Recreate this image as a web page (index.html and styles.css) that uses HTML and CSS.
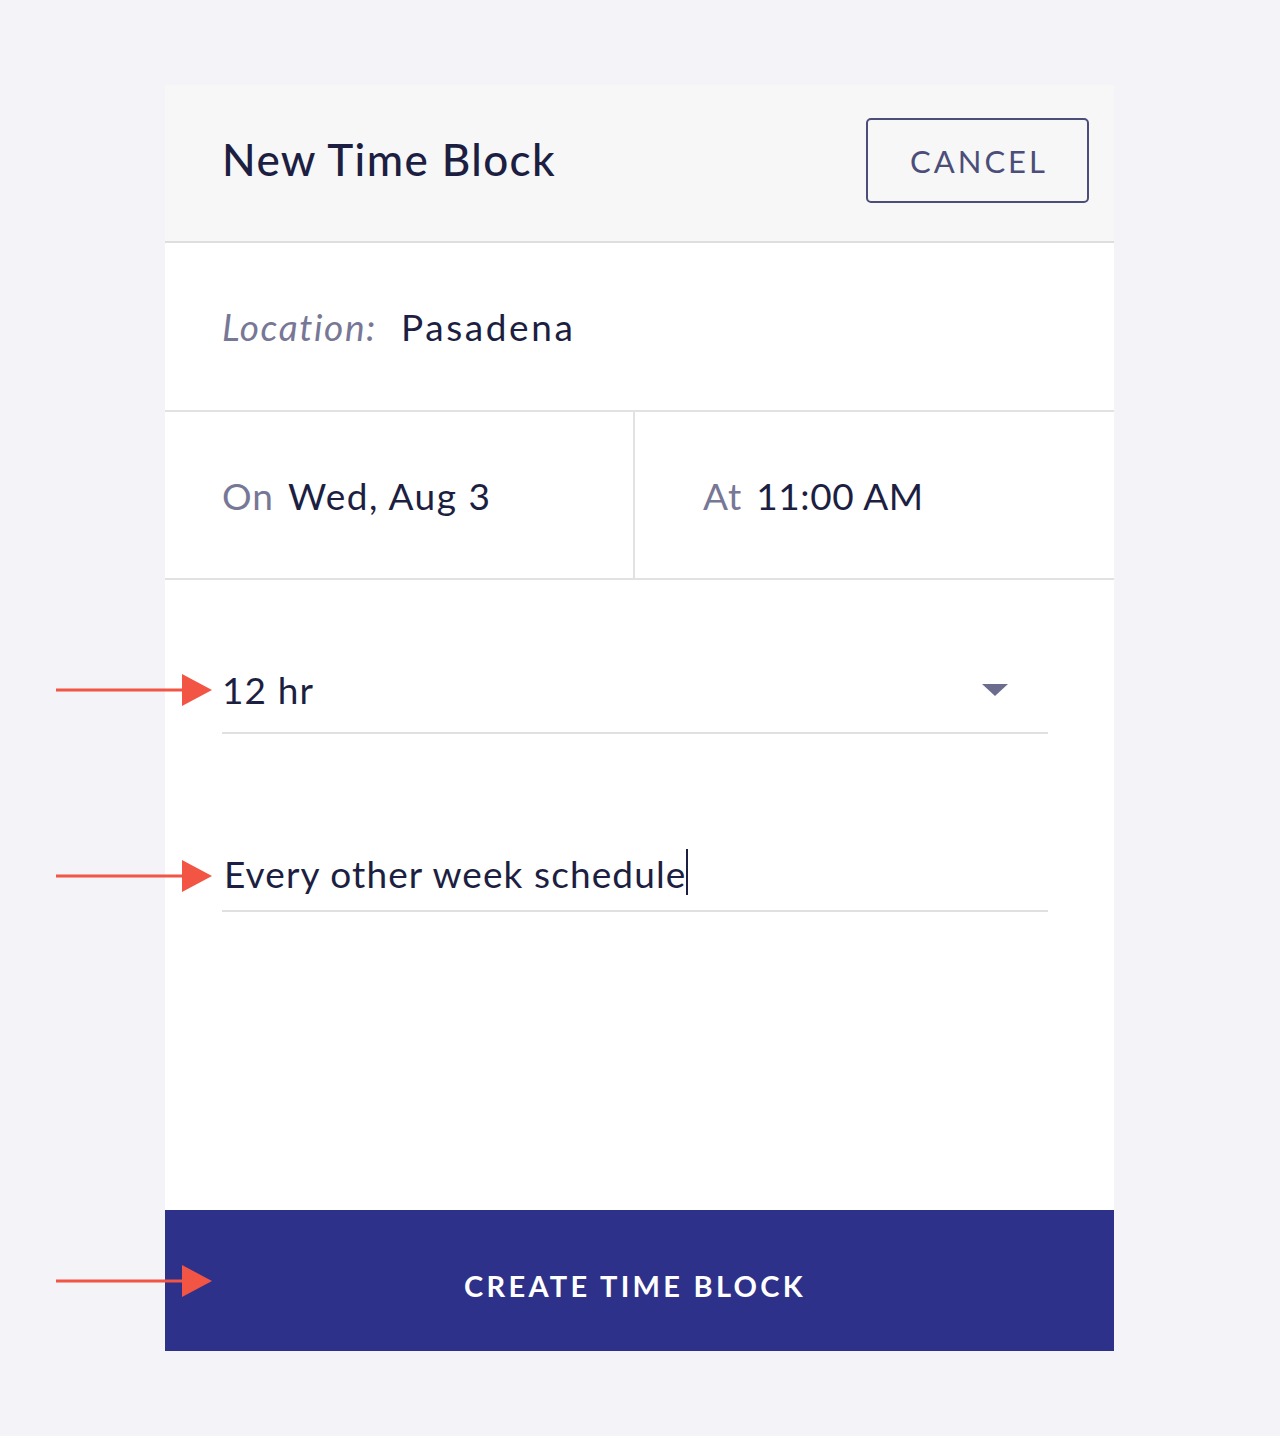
FILE: index.html
```html
<!DOCTYPE html>
<html lang="en">
<head>
<meta charset="utf-8">
<title>New Time Block</title>
<link rel="stylesheet" href="styles.css">
</head>
<body>
<div class="page">
  <div class="card">
    <header class="card-header">
      <h1 class="title">New Time Block</h1>
      <button class="cancel-btn" type="button">CANCEL</button>
    </header>
    <div class="row location-row">
      <span class="label label-italic">Location:</span>
      <span class="value value-wide">Pasadena</span>
    </div>
    <div class="row split-row">
      <div class="cell cell-left">
        <span class="label">On</span>
        <span class="value">Wed, Aug 3</span>
      </div>
      <div class="cell cell-right">
        <span class="label">At</span>
        <span class="value value-tight">11:00 AM</span>
      </div>
    </div>
    <div class="form-body">
      <div class="field field-select">
        <span class="field-text">12 hr</span>
        <svg class="caret" width="26" height="12" viewBox="0 0 26 12"><polygon points="0,0 26,0 13,12" fill="#6c6c8f"/></svg>
      </div>
      <div class="field field-input">
        <span class="field-text">Every other week schedule</span><span class="cursor"></span>
      </div>
    </div>
    <button class="create-btn" type="button">CREATE TIME BLOCK</button>
  </div>

  <svg class="arrow arrow-1" width="160" height="34" viewBox="0 0 160 34"><rect x="0" y="15.5" width="130" height="3" fill="#f25543"/><polygon points="126,1 156,17 126,33" fill="#f25543"/></svg>
  <svg class="arrow arrow-2" width="160" height="34" viewBox="0 0 160 34"><rect x="0" y="15.5" width="130" height="3" fill="#f25543"/><polygon points="126,1 156,17 126,33" fill="#f25543"/></svg>
  <svg class="arrow arrow-3" width="160" height="34" viewBox="0 0 160 34"><rect x="0" y="15.5" width="130" height="3" fill="#f25543"/><polygon points="126,1 156,17 126,33" fill="#f25543"/></svg>
</div>
</body>
</html>
```

FILE: styles.css
```css
* { box-sizing: border-box; }

html, body {
  margin: 0;
  padding: 0;
  background: #f3f3f8;
}

body {
  font-family: Lato, "Noto Sans", sans-serif;
  color: #1d1f42;
  height: 1436px;
}

.page {
  position: relative;
  padding-top: 85px;
}

.card {
  width: 949px;
  margin: 0 0 0 165px;
  background: #ffffff;
  display: flex;
  flex-direction: column;
}

.card-header {
  height: 158px;
  background: #f7f7f7;
  border-bottom: 2px solid #dedee0;
  display: flex;
  justify-content: space-between;
  align-items: flex-start;
  padding: 33px 25px 0 57px;
}

.title {
  margin: 0;
  font-size: 44px;
  font-weight: 500;
  line-height: 82px;
  color: #1d1f42;
  letter-spacing: 1.4px;
}

.cancel-btn {
  width: 223px;
  height: 85px;
  border: 2px solid #4b4e78;
  border-radius: 5px;
  background: transparent;
  color: #4b4e78;
  font-family: Lato, "Noto Sans", sans-serif;
  font-size: 31px;
  letter-spacing: 3px;
  padding: 0 0 0 3px;
}

.row {
  border-bottom: 2px solid #e2e2e4;
  display: flex;
  align-items: center;
}

.location-row {
  height: 169px;
  padding-left: 57px;
  gap: 24px;
}

.label {
  color: #777796;
  font-size: 37px;
  letter-spacing: 1px;
}

.label-italic {
  font-style: italic;
  letter-spacing: 1.6px;
}

.value {
  color: #1d1f42;
  font-size: 37px;
  letter-spacing: 1.5px;
}

.value-wide {
  letter-spacing: 2.6px;
}

.value-tight {
  letter-spacing: 0.6px;
}

.split-row {
  height: 168px;
  align-items: stretch;
}

.cell {
  display: flex;
  align-items: center;
  gap: 14px;
}

.cell-left {
  width: 470px;
  padding-left: 57px;
  border-right: 2px solid #e2e2e4;
}

.cell-right {
  flex: 1;
  padding-left: 68px;
}

.form-body {
  height: 630px;
  padding: 88px 66px 0 57px;
  display: flex;
  flex-direction: column;
  gap: 112px;
}

.field {
  height: 66px;
  border-bottom: 2px solid #e0e0e2;
  display: flex;
  align-items: flex-start;
}

.field-text {
  font-size: 37px;
  line-height: 44px;
  color: #1d1f42;
  letter-spacing: 1.1px;
}

.field-select {
  justify-content: space-between;
}

.field-input {
  padding-left: 2px;
  padding-top: 6px;
}

.caret {
  margin-top: 16px;
  margin-right: 40px;
}

.cursor {
  display: inline-block;
  width: 2px;
  height: 46px;
  background: #1d1f42;
  margin-top: -3px;
  margin-left: 0;
}

.create-btn {
  height: 141px;
  width: 100%;
  border: none;
  background: #2e3189;
  color: #ffffff;
  font-family: Lato, "Noto Sans", sans-serif;
  font-size: 29px;
  font-weight: 700;
  letter-spacing: 3.3px;
  padding: 9px 9px 0 0;
}

.arrow {
  position: absolute;
  left: 56px;
}

.arrow-1 { top: 673px; }
.arrow-2 { top: 859px; }
.arrow-3 { top: 1264px; }
```
